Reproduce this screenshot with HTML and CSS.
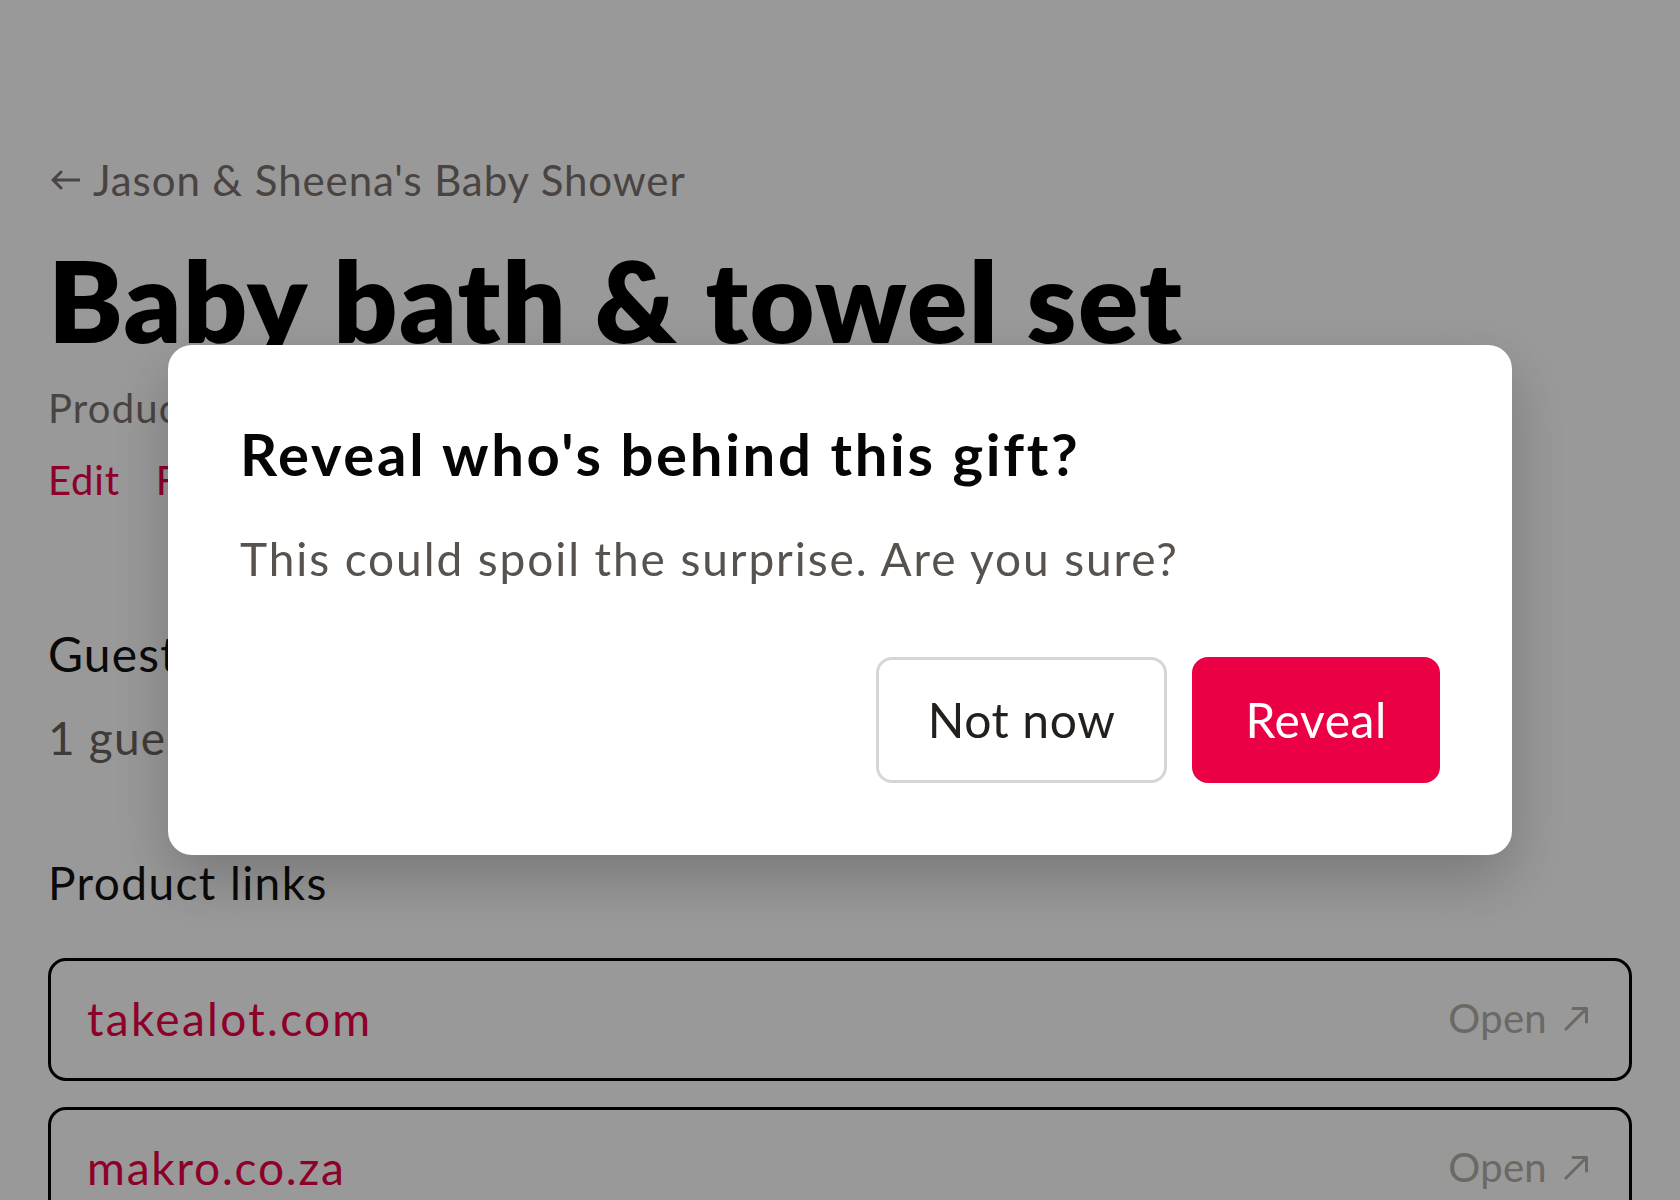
FILE: index.html
```html
<!DOCTYPE html>
<html lang="en">
<head>
<meta charset="utf-8">
<title>Baby bath &amp; towel set</title>
<link rel="stylesheet" href="styles.css">
</head>
<body>
<main class="page">
  <a class="back" href="#">
    <svg class="back-icon" width="30" height="20" viewBox="0 0 30 20" aria-hidden="true">
      <path d="M29 10H3M11 2L3 10l8 8" fill="none" stroke="currentColor" stroke-width="3" stroke-linecap="round" stroke-linejoin="round"/>
    </svg>
    <span>Jason &amp; Sheena's Baby Shower</span>
  </a>
  <h1 class="title">Baby bath &amp; towel set</h1>
  <p class="meta">Product</p>
  <div class="actions">
    <a class="action" href="#">Edit</a>
    <a class="action" href="#">Flag</a>
  </div>

  <section class="guests">
    <h2 class="section-title">Guests</h2>
    <p class="section-text">1 guest</p>
  </section>

  <section class="links">
    <h2 class="section-title links-title">Product links</h2>
    <ul class="link-list">
      <li class="link-card">
        <span class="link-name">takealot.com</span>
        <span class="link-open">Open
          <svg class="open-icon" width="25" height="25" viewBox="0 0 25 25" aria-hidden="true">
            <path d="M2 23L22.5 2.5M9 2.5h13.5V16" fill="none" stroke="currentColor" stroke-width="3" stroke-linecap="round" stroke-linejoin="round"/>
          </svg>
        </span>
      </li>
      <li class="link-card">
        <span class="link-name link-name-tight">makro.co.za</span>
        <span class="link-open">Open
          <svg class="open-icon" width="25" height="25" viewBox="0 0 25 25" aria-hidden="true">
            <path d="M2 23L22.5 2.5M9 2.5h13.5V16" fill="none" stroke="currentColor" stroke-width="3" stroke-linecap="round" stroke-linejoin="round"/>
          </svg>
        </span>
      </li>
    </ul>
  </section>
</main>

<div class="overlay">
  <div class="dialog" role="dialog" aria-modal="true">
    <h2 class="dialog-title">Reveal who's behind this gift?</h2>
    <p class="dialog-text">This could spoil the surprise. Are you sure?</p>
    <div class="dialog-actions">
      <button class="btn btn-secondary" type="button">Not now</button>
      <button class="btn btn-primary" type="button">Reveal</button>
    </div>
  </div>
</div>
</body>
</html>
```

FILE: styles.css
```css
html, body {
  margin: 0;
  padding: 0;
  background: #ffffff;
}

body {
  font-family: Lato, "Open Sans", sans-serif;
  color: #111111;
  height: 1200px;
  overflow: hidden;
}

.page {
  padding: 155px 48px 0 48px;
}

.back {
  display: flex;
  align-items: center;
  gap: 13px;
  height: 50px;
  font-size: 42px;
  line-height: 50px;
  letter-spacing: 0.9px;
  color: #7a726d;
  text-decoration: none;
}

.back-icon {
  flex: none;
  margin-left: 2px;
}

.title {
  margin: 28px 0 0 0;
  font-size: 112px;
  line-height: 134px;
  font-weight: 800;
  letter-spacing: 1.45px;
  color: #000000;
  white-space: nowrap;
}

.meta {
  margin: 17px 0 0 0;
  font-size: 40px;
  line-height: 48px;
  letter-spacing: 1.2px;
  color: #7a726d;
}

.actions {
  display: flex;
  gap: 36px;
  margin-top: 24px;
}

.action {
  font-size: 40px;
  line-height: 48px;
  letter-spacing: 0.8px;
  color: #eb0045;
  text-decoration: none;
}

.guests {
  margin-top: 121px;
}

.section-title {
  margin: 0;
  font-size: 48px;
  line-height: 58px;
  font-weight: 400;
  letter-spacing: 1.2px;
  color: #111111;
}

.section-text {
  margin: 27px 0 0 0;
  font-size: 46px;
  line-height: 55px;
  letter-spacing: 1.2px;
  color: #6a635f;
}

.links {
  margin-top: 90px;
}

.links-title {
  font-size: 46px;
  line-height: 55px;
  letter-spacing: 1.4px;
}

.link-list {
  list-style: none;
  margin: 48px 0 0 0;
  padding: 0;
  display: flex;
  flex-direction: column;
  gap: 26px;
}

.link-card {
  box-sizing: border-box;
  height: 123px;
  border: 3px solid #000000;
  border-radius: 18px;
  padding: 0 40px 0 36px;
  display: flex;
  align-items: center;
  justify-content: space-between;
}

.link-name {
  font-size: 46px;
  line-height: 55px;
  letter-spacing: 2.3px;
  color: #eb0045;
  margin-top: -3px;
}

.link-name-tight {
  letter-spacing: 1.8px;
}

.link-open {
  display: flex;
  align-items: center;
  gap: 17px;
  font-size: 40px;
  line-height: 48px;
  letter-spacing: 0.3px;
  color: #b5ada7;
  margin-top: -3px;
}

.open-icon {
  flex: none;
  width: 25px;
  height: 25px;
}

/* modal */
.overlay {
  position: fixed;
  inset: 0;
  background: rgba(0, 0, 0, 0.4);
  display: flex;
  align-items: center;
  justify-content: center;
}

.dialog {
  box-sizing: border-box;
  width: 1344px;
  padding: 72px;
  background: #ffffff;
  border-radius: 24px;
  box-shadow: 0 24px 60px rgba(0, 0, 0, 0.22);
}

.dialog-title {
  margin: 0;
  font-size: 58px;
  line-height: 74px;
  font-weight: 700;
  letter-spacing: 2.7px;
  color: #050505;
}

.dialog-text {
  margin: 40px 0 0 0;
  font-size: 46px;
  line-height: 55px;
  letter-spacing: 1.9px;
  color: #57524d;
}

.dialog-actions {
  display: flex;
  justify-content: flex-end;
  gap: 25px;
  margin-top: 71px;
}

.btn {
  box-sizing: border-box;
  height: 126px;
  padding: 0 49px;
  border-radius: 16px;
  font-family: Lato, "Open Sans", sans-serif;
  font-size: 48px;
  line-height: 58px;
  letter-spacing: 0.6px;
  cursor: pointer;
}

.btn-secondary {
  background: #ffffff;
  border: 3px solid #d8d5d2;
  color: #231f1c;
}

.btn-primary {
  background: #eb0045;
  border: 3px solid #eb0045;
  color: #ffffff;
  padding: 0 50px;
}
```
